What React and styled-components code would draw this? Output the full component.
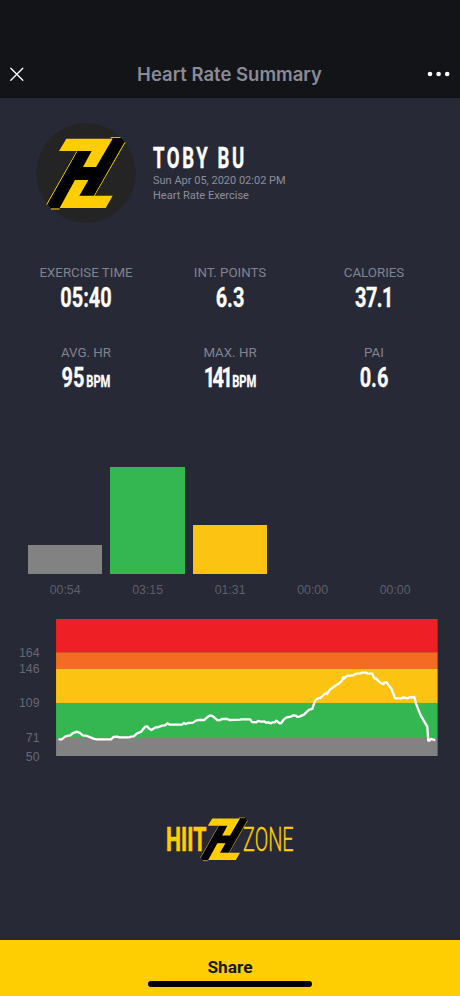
import styled, { createGlobalStyle } from "styled-components";

const GlobalStyle = createGlobalStyle`
  * {
    box-sizing: border-box;
  }
  body {
    margin: 0;
    background: #272937;
    font-family: Roboto, "Noto Sans", sans-serif;
  }
`;

const stats = [
  { label: "EXERCISE TIME", value: "05:40" },
  { label: "INT. POINTS", value: "6.3" },
  { label: "CALORIES", value: "37.1", tracking: -0.8 },
  { label: "AVG. HR", value: "95", unit: "BPM" },
  { label: "MAX. HR", value: "141", unit: "BPM", tracking: -3.6 },
  { label: "PAI", value: "0.6" },
];

const zones = [
  { time: "00:54", height: 29, color: "#828282" },
  { time: "03:15", height: 106.5, color: "#34b651" },
  { time: "01:31", height: 49, color: "#fdc312" },
  { time: "00:00", height: 0, color: "#f36c21" },
  { time: "00:00", height: 0, color: "#ee2026" },
];

const bands = [
  { y: 0, height: 101, color: "#ee2026" },
  { y: 100, height: 51, color: "#f36c21" },
  { y: 150, height: 103, color: "#fdc312" },
  { y: 252, height: 106, color: "#34b651" },
  { y: 357, height: 55, color: "#828282" },
];

const ticks = [
  { label: "164", gap: 26 },
  { label: "146", gap: 0.5 },
  { label: "109", gap: 17.5 },
  { label: "71", gap: 19.5 },
  { label: "50", gap: 3 },
];

const heartRate =
  "10,362 17,362 27,354 36,351 43,350 52,342 57,342 61,339 69,342 73,344 80,350 93,352 103,356 112,360 121,362 165,362 172,355 184,354 190,356 221,356 224,354 233,353 243,344 255,340 260,333 268,324 274,323 278,329 286,334 299,326 305,326 318,321 327,320 334,314 341,318 378,318 384,313 389,316 396,313 411,312 420,306 428,304 445,304 455,295 460,291 467,291 474,296 483,304 491,305 498,301 514,301 520,304 552,303 557,302 582,302 588,310 601,311 606,307 616,309 625,308 630,312 637,311 645,314 650,311 656,311 661,306 671,314 675,314 684,302 693,296 707,293 712,290 720,291 724,295 730,294 744,288 753,279 760,273 769,271 776,250 781,242 788,238 793,238 808,224 813,226 822,213 841,199 848,195 858,186 862,176 864,180 872,172 891,170 900,165 913,164 918,162 931,162 935,165 949,165 955,180 960,179 966,186 977,195 983,196 986,191 992,191 997,199 1006,210 1017,238 1020,239 1037,239 1042,236 1055,239 1059,236 1075,235 1080,254 1094,290 1114,324 1117,366 1121,366 1125,361 1135,364";

const Screen = styled.div`
  width: 460px;
  height: 996px;
  display: flex;
  flex-direction: column;
  overflow: hidden;
  background: #272937;
`;

const TopBar = styled.header`
  height: 98px;
  padding: 51px 10px 0 9px;
  display: grid;
  grid-template-columns: 24px 1fr 24px;
  align-items: center;
  background: #131418;
  border-bottom: 1px solid #101116;
  h1 {
    margin: 0;
    font: 600 18.5px/24px Inter, sans-serif;
    text-align: center;
    color: #8a8b97;
  }
  svg {
    display: block;
  }
`;

const Profile = styled.section`
  height: 132px;
  padding: 24.5px 0 0 36px;
  display: flex;
  gap: 17px;
`;

const Avatar = styled.svg`
  width: 100px;
  height: 100px;
  flex: none;
`;

const UserInfo = styled.div`
  padding-top: 20px;
  h2 {
    margin: 0;
    font-size: 29px;
    line-height: 31.5px;
    letter-spacing: 4.1px;
    white-space: nowrap;
    color: #fff;
    -webkit-text-stroke: 0.4px #fff;
    transform: scaleX(0.64);
    transform-origin: left;
  }
  p {
    margin: 0;
    font-size: 11px;
    line-height: 14.5px;
    color: #8d8e9b;
  }
`;

const Stats = styled.section`
  height: 236.5px;
  padding: 34px 14px 0;
  display: grid;
  grid-template-columns: repeat(3, 1fr);
  grid-auto-rows: 80px;
`;

const Stat = styled.div`
  text-align: center;
  span {
    display: block;
    font-size: 13.3px;
    line-height: 18px;
    color: #82838f;
  }
`;

const StatValue = styled.strong`
  display: flex;
  justify-content: center;
  align-items: baseline;
  gap: 2.5px;
  font-size: 28.5px;
  line-height: 31px;
  letter-spacing: ${(props) => props.$tracking || 0}px;
  color: #fff;
  -webkit-text-stroke: 0.3px #fff;
  transform: scaleX(0.7);
  small {
    font-size: 16px;
    letter-spacing: 0;
  }
`;

const ZoneBars = styled.section`
  height: 152px;
  padding: 0 27.6px 0 27.8px;
  display: grid;
  grid-template-columns: repeat(5, 1fr);
  gap: 7.9px;
`;

const Zone = styled.div`
  display: flex;
  flex-direction: column;
  justify-content: flex-end;
  font: 12.3px/16px "Liberation Sans", sans-serif;
  text-align: center;
  color: #5d5f6a;
  span {
    margin-top: 8.5px;
    height: 36.5px;
  }
`;

const Bar = styled.div`
  height: ${(props) => props.$height}px;
  background: ${(props) => props.$color};
`;

const HeartRate = styled.section`
  height: 199.5px;
  display: flex;
  gap: 16.5px;
`;

const Scale = styled.div`
  width: 39.5px;
  text-align: right;
  font: 12.3px/16px "Liberation Sans", sans-serif;
  color: #666873;
`;

const Tick = styled.div`
  margin-top: ${(props) => props.$gap}px;
`;

const Graph = styled.svg`
  width: 381.7px;
  height: 137.3px;
  margin-top: 0.3px;
`;

const Brand = styled.svg`
  width: 150px;
  height: 70px;
  margin: -13px 0 0 155px;
  overflow: visible;
`;

const ShareButton = styled.button`
  margin-top: auto;
  height: 56px;
  padding: 16px 0 0;
  border: 0;
  display: flex;
  flex-direction: column;
  align-items: center;
  background: #ffce02;
  font: 700 17.3px/23px Roboto, sans-serif;
  color: #161a14;
`;

const HomeIndicator = styled.i`
  width: 164px;
  height: 5.5px;
  margin-top: 2.2px;
  flex: none;
  border-radius: 3px;
  background: #000;
`;

function Emblem({ transform }) {
  return (
    <g transform={transform}>
      <path
        d="M254 66H283M297 80L204 241M153 107L62 267M75 280H101"
        fill="none"
        stroke="#ffce02"
        strokeWidth="3"
      />
      <path
        d="M260 68H286L295 78L203 241H159L188 193H147L101 277H75L65 266L155 106H197L171 154H211Z"
        fill="#000"
      />
      <path
        d="M121 69H260L210 154H171L197 106H99ZM147 193H187L160 240H260L239 277H101Z"
        fill="#ffce02"
      />
    </g>
  );
}

function App() {
  return (
    <>
      <GlobalStyle />
      <Screen>
        <TopBar>
          <svg width="16" height="16" viewBox="0 0 16 16">
            <path
              d="M1.8 2.2L13.8 14.2M13.8 2.2L1.8 14.2"
              stroke="#fff"
              strokeWidth="1.3"
              strokeLinecap="round"
            />
          </svg>
          <h1>Heart Rate Summary</h1>
          <svg width="24" height="6" viewBox="0 0 24 6" fill="#fff">
            <circle cx="4" cy="3" r="2.3" />
            <circle cx="12.6" cy="3" r="2.3" />
            <circle cx="21.2" cy="3" r="2.3" />
          </svg>
        </TopBar>
        <Profile>
          <Avatar viewBox="30 22 300 300">
            <circle cx="180" cy="172" r="149" fill="#232423" />
            <Emblem />
          </Avatar>
          <UserInfo>
            <h2>TOBY BU</h2>
            <p>Sun Apr 05, 2020 02:02 PM</p>
            <p>Heart Rate Exercise</p>
          </UserInfo>
        </Profile>
        <Stats>
          {stats.map((stat) => (
            <Stat key={stat.label}>
              <span>{stat.label}</span>
              <StatValue $tracking={stat.tracking}>
                {stat.value}
                {stat.unit && <small>{stat.unit}</small>}
              </StatValue>
            </Stat>
          ))}
        </Stats>
        <ZoneBars>
          {zones.map((zone, index) => (
            <Zone key={index}>
              <Bar $height={zone.height} $color={zone.color} />
              <span>{zone.time}</span>
            </Zone>
          ))}
        </ZoneBars>
        <HeartRate>
          <Scale>
            {ticks.map((tick) => (
              <Tick key={tick.label} $gap={tick.gap}>
                {tick.label}
              </Tick>
            ))}
          </Scale>
          <Graph viewBox="0 0 1145 412">
            {bands.map((band) => (
              <rect
                key={band.y}
                y={band.y}
                width="1145"
                height={band.height}
                fill={band.color}
              />
            ))}
            <polyline
              points={heartRate}
              transform="translate(0 -1)"
              fill="none"
              stroke="#fff"
              strokeWidth="7"
              strokeLinejoin="round"
              strokeLinecap="round"
            />
          </Graph>
        </HeartRate>
        <Brand viewBox="0 0 450 210" fill="#ffce02" fontFamily="Roboto">
          <text
            x="33"
            y="138"
            fontSize="101"
            fontWeight="700"
            stroke="#ffce02"
            strokeWidth="2"
            textLength="121"
            lengthAdjust="spacingAndGlyphs"
          >
            HIIT
          </text>
          <text
            x="264"
            y="138"
            fontSize="101"
            fontWeight="300"
            stroke="#ffce02"
            strokeWidth="1"
            textLength="152"
            lengthAdjust="spacingAndGlyphs"
          >
            ZONE
          </text>
          <Emblem transform="translate(99 -1) scale(0.6)" />
        </Brand>
        <ShareButton>
          Share
          <HomeIndicator />
        </ShareButton>
      </Screen>
    </>
  );
}

export default App;
